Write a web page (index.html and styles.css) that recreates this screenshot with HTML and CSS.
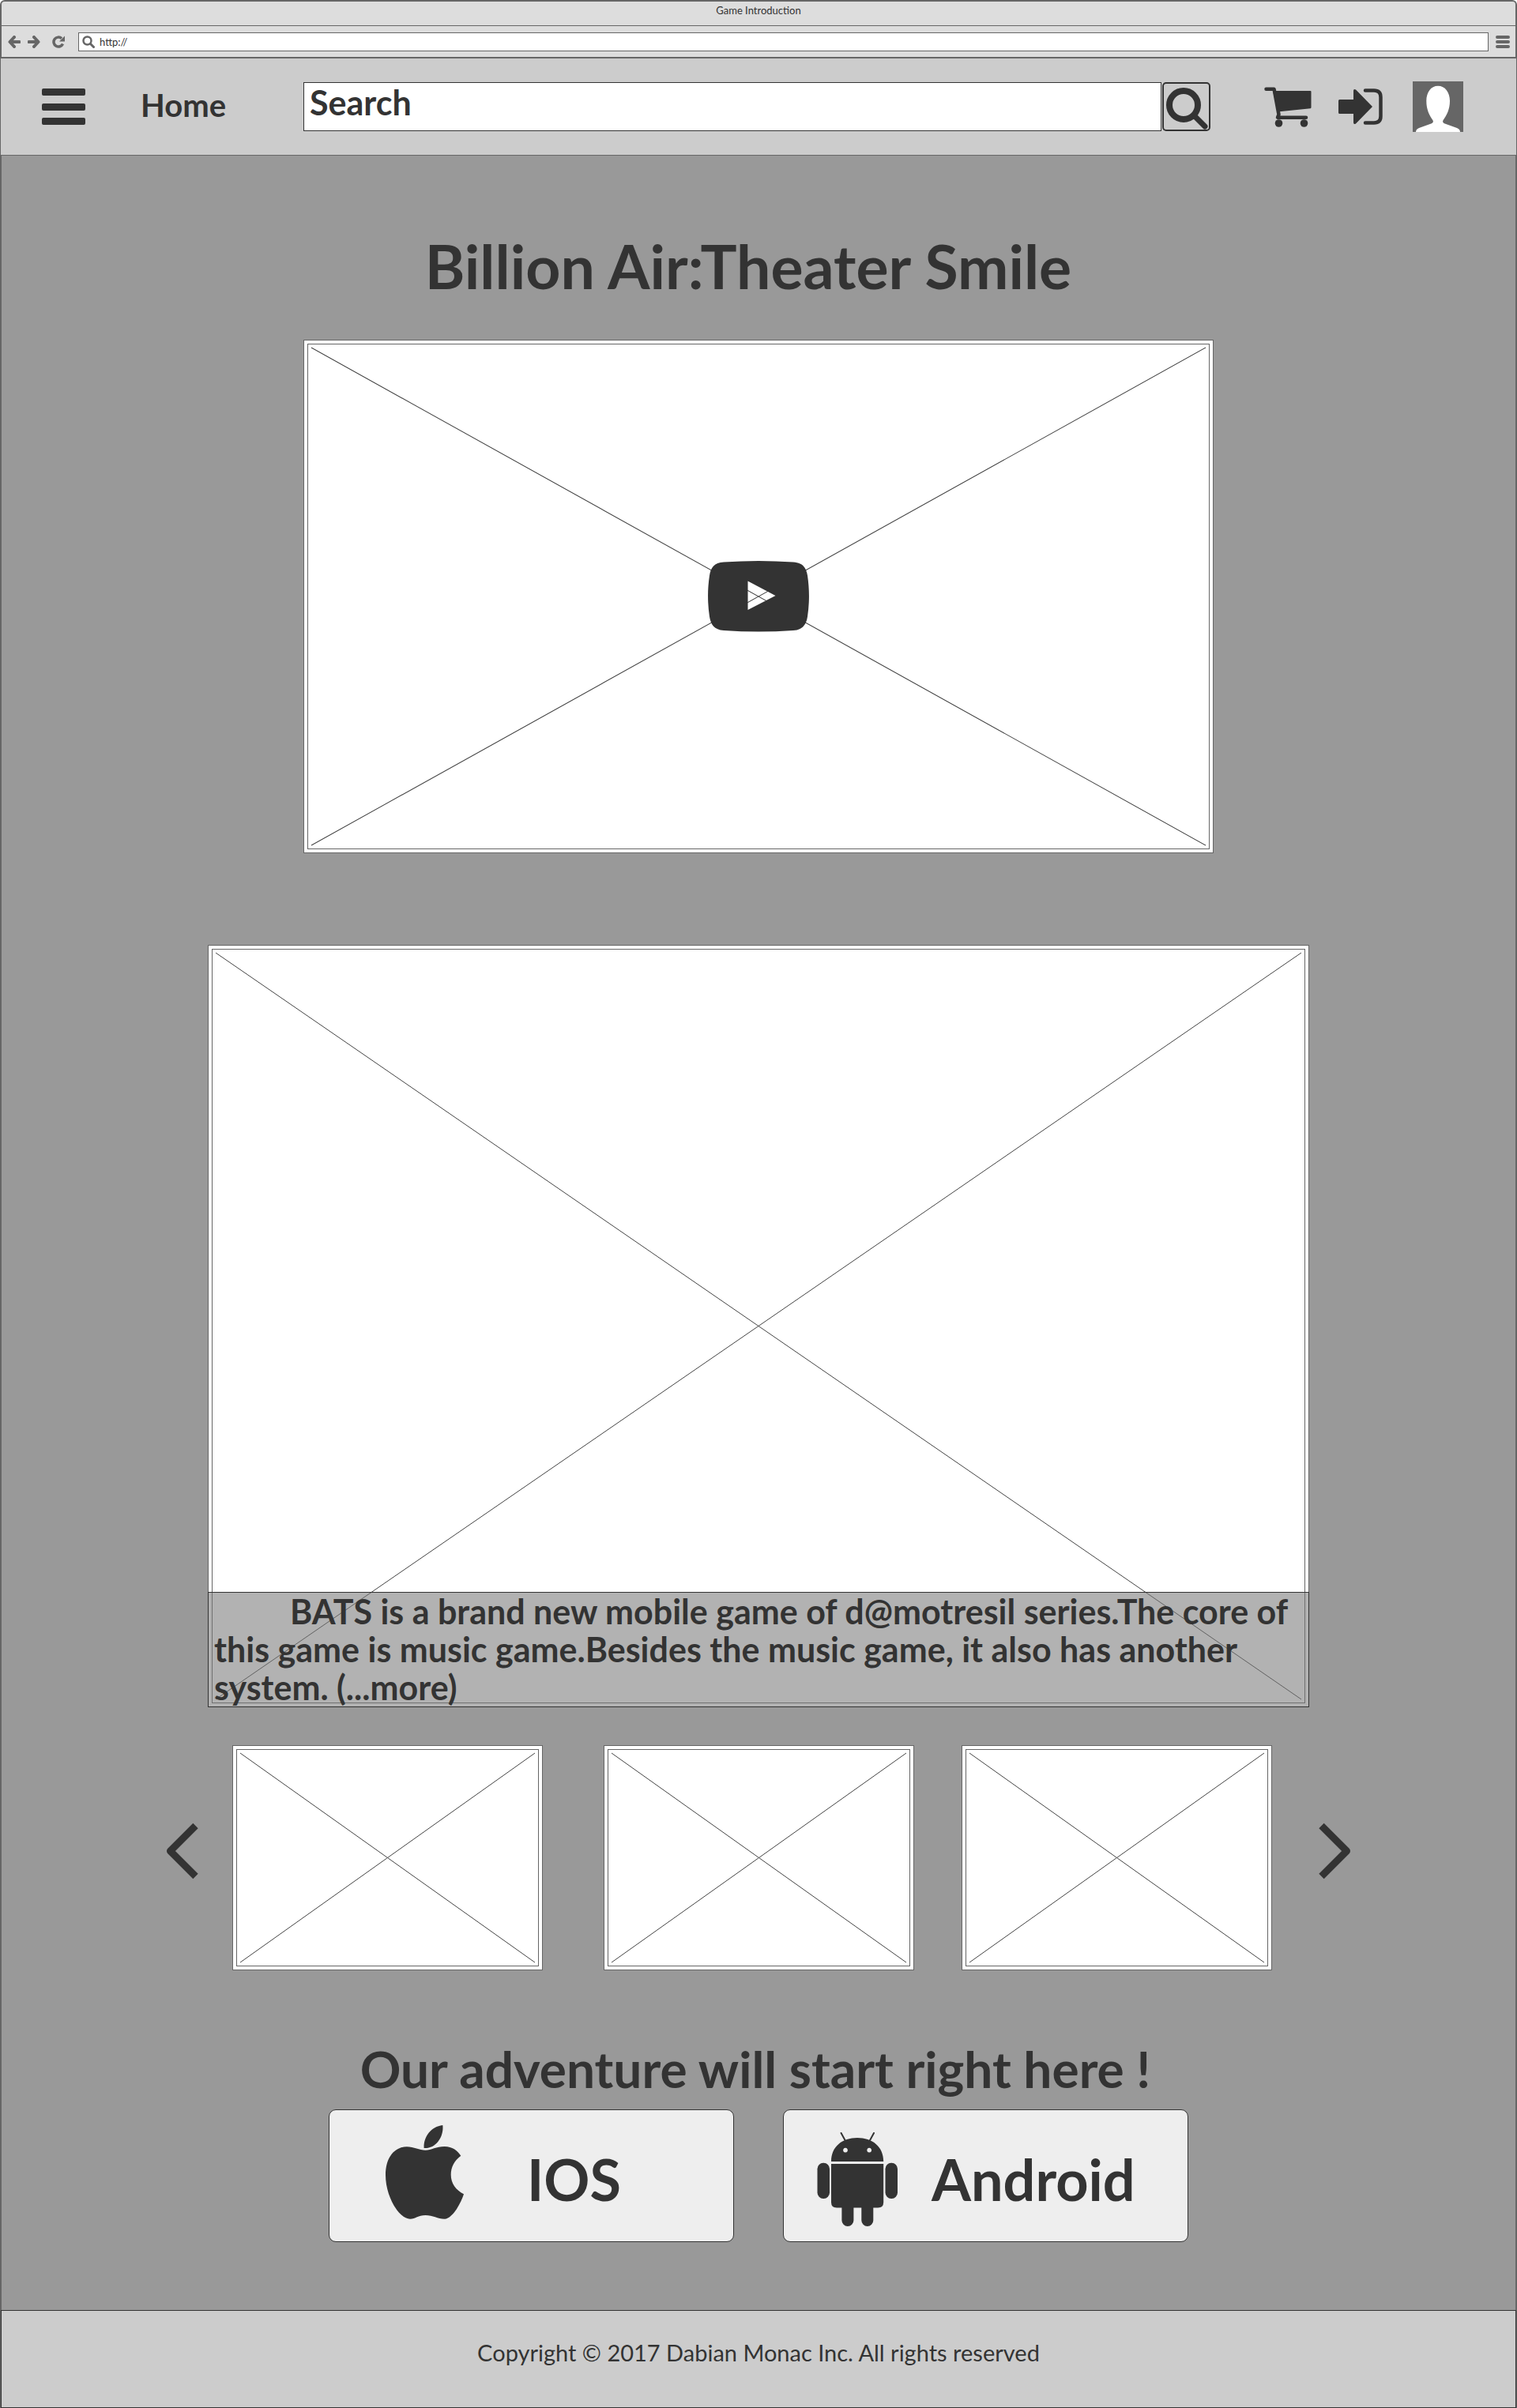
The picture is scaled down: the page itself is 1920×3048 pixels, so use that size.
FILE: index.html
```html
<!DOCTYPE html>
<html lang="en">
<head>
<meta charset="utf-8">
<title>Game Introduction</title>
<meta name="viewport" content="width=device-width, initial-scale=1">
<link rel="stylesheet" href="styles.css">
</head>
<body>
<div class="window">
  <div class="titlebar">Game Introduction</div>
  <div class="toolbar">
    <button class="tool" type="button" aria-label="Back"><svg width="16" height="16" viewBox="0 0 16 16"><path d="M8 2 2.500 8 8 14M3 8h11.500" fill="none" stroke="#666" stroke-width="4" stroke-linecap="round" stroke-linejoin="round"/></svg></button>
    <button class="tool" type="button" aria-label="Forward"><svg width="16" height="16" viewBox="0 0 16 16"><path d="M8 2 13.500 8 8 14M13 8H1.500" fill="none" stroke="#666" stroke-width="4" stroke-linecap="round" stroke-linejoin="round"/></svg></button>
    <button class="tool tool-reload" type="button" aria-label="Reload"><svg width="16" height="16" viewBox="0 0 16 16"><path d="M13.500 10.500A6 6 0 1 1 12 3.600" fill="none" stroke="#666" stroke-width="3.500"/><path d="M16 .5V7.500H9z" fill="#666"/></svg></button>
    <label class="address">
      <svg width="16" height="16" viewBox="0 0 16 16" aria-hidden="true"><circle cx="6.500" cy="6.500" r="5" fill="none" stroke="#666" stroke-width="2.500"/><path d="m10.500 10.500 4 4" stroke="#666" stroke-width="3" stroke-linecap="round"/></svg>
      <input class="address-input" type="text" value="http://" aria-label="Address">
    </label>
    <button class="tool tool-menu" type="button" aria-label="Browser menu"><svg width="18" height="16" viewBox="0 0 18 16"><path d="M2 2h14M2 8h14M2 14h14" stroke="#666" stroke-width="4" stroke-linecap="round"/></svg></button>
  </div>

  <header class="header">
    <button class="icon-button" type="button" aria-label="Menu"><svg width="56" height="46" viewBox="0 0 56 46"><g fill="#333"><rect width="55" height="9" rx="2"/><rect y="19" width="55" height="9" rx="2"/><rect y="37" width="55" height="9" rx="2"/></g></svg></button>
    <a class="home" href="#">Home</a>
    <form class="search">
      <input class="search-input" type="search" placeholder="Search" aria-label="Search">
      <button class="search-button" type="button" aria-label="Search"><svg width="57" height="58" viewBox="0 0 57 58"><circle cx="25" cy="27" r="18" fill="none" stroke="#333" stroke-width="8"/><path d="m40 42 12 12" stroke="#333" stroke-width="7" stroke-linecap="round"/></svg></button>
    </form>
    <nav class="actions">
      <a class="action" href="#" aria-label="Cart"><svg width="60" height="51" viewBox="0 0 60 51"><path d="M2.500 2.700h10L18.500 35 17 38.700h36" fill="none" stroke="#333" stroke-width="4.500" stroke-linecap="round" stroke-linejoin="round"/><path d="M11 5h47.500q1 0 1 1v20q0 1-1 1.200L17 31.500z" fill="#333"/><circle cx="18.500" cy="46" r="4.800" fill="#333"/><circle cx="50.500" cy="46" r="4.800" fill="#333"/></svg></a>
      <a class="action action-login" href="#" aria-label="Log in"><svg width="56" height="46" viewBox="0 0 56 46"><path d="M1.500 14H19V3q0-3 3-1.500L43 23 22 44.500q-3 1.500-3-1.500V32H1.500Q0 32 0 30.500v-15Q0 14 1.500 14z" fill="#333"/><path d="M34 2.500h11Q53.500 2.500 53.500 11v24q0 8.500-8.500 8.500H34" fill="none" stroke="#333" stroke-width="4.500" stroke-linecap="round"/></svg></a>
      <a class="action action-profile" href="#" aria-label="Profile"><svg width="64" height="64" viewBox="0 0 64 64"><path fill="#666" d="M0 0h64v64H0z"/><path fill="#fff" d="M32 5.700c9 0 15 8 15 19 0 11-4 18-8.500 24.500-1 2 0 3.300 1.500 4L56 59q4 1.500 4 5H4q0-3.500 4-5l16-5.800c1.500-.7 2.500-2 1.500-4C21 42.700 17.300 35.700 17.300 24.700c0-11 5.700-19 14.700-19z"/></svg></a>
    </nav>
  </header>

  <main class="main">
    <h1 class="title">Billion Air:Theater Smile</h1>

    <div class="frame video">
      <svg class="cross" viewBox="0 0 100 100" preserveAspectRatio="none" aria-hidden="true"><path d="M0 0 100 100M100 0 0 100"/></svg>
      <button class="play" type="button" aria-label="Play video"><svg width="128" height="90" viewBox="0 0 128 90"><path fill="#333" fill-rule="evenodd" d="M20 1.500Q64-1.500 108 1.500c12 .8 16.500 7 18 17 2.600 17 2.600 35 0 52-1.500 10-6 16.700-18 17.500q-44 3-88 0C8 87.200 3.500 80.500 2 70.500c-2.600-17-2.600-35 0-52 1.500-10 6-16.200 18-17zM50.500 25.500v36.500L85.500 44z"/></svg></button>
    </div>

    <figure class="frame feature">
      <svg class="cross" viewBox="0 0 100 100" preserveAspectRatio="none" aria-hidden="true"><path d="M0 0 100 100M100 0 0 100"/></svg>
      <figcaption class="caption">BATS is a brand new mobile game of d@motresil series.The core of this game is music game.Besides the music game, it also has another system. (...more)</figcaption>
    </figure>

    <div class="gallery">
      <button class="icon-button arrow" type="button" aria-label="Previous"><svg width="42" height="74" viewBox="0 0 42 74"><path d="M37.500 5 5.500 37l32 32" fill="none" stroke="#333" stroke-width="9" stroke-linejoin="round"/></svg></button>
      <div class="frame thumb thumb-1"><svg class="cross" viewBox="0 0 100 100" preserveAspectRatio="none" aria-hidden="true"><path d="M0 0 100 100M100 0 0 100"/></svg></div>
      <div class="frame thumb thumb-2"><svg class="cross" viewBox="0 0 100 100" preserveAspectRatio="none" aria-hidden="true"><path d="M0 0 100 100M100 0 0 100"/></svg></div>
      <div class="frame thumb thumb-3"><svg class="cross" viewBox="0 0 100 100" preserveAspectRatio="none" aria-hidden="true"><path d="M0 0 100 100M100 0 0 100"/></svg></div>
      <button class="icon-button arrow arrow-next" type="button" aria-label="Next"><svg width="42" height="74" viewBox="0 0 42 74"><path d="m4.500 5 32 32-32 32" fill="none" stroke="#333" stroke-width="9" stroke-linejoin="round"/></svg></button>
    </div>

    <h2 class="tagline">Our adventure will start right here !</h2>
    <div class="downloads">
      <button class="download download-ios" type="button">
        <svg width="99" height="119" viewBox="0 0 99 119" aria-hidden="true"><path fill="#333" d="M72.300 0C74 14 64 30 48.600 29 48 15 57 2 72.300 0zM50.500 31.700C58 31.700 64 27 74.600 27c10 0 16 5 20.700 11.700C87 45 82.700 53 82.700 62.700 82.700 74 89 82 99 87.300 95 100 84 118.700 74.600 118.700 66 118.700 60 114 50.500 114S38 118.700 31 118.700C17 118.700 0 90 0 63.300 0 40 12 27.300 26.800 27.300c9 0 16 4.400 23.700 4.400z"/></svg>
        <span>IOS</span>
      </button>
      <button class="download download-android" type="button">
        <svg width="102" height="119" viewBox="0 0 102 119" aria-hidden="true"><g fill="#333"><path fill-rule="evenodd" d="M18 37C18 18 32 7 51 7s33.200 11 33.200 30zM36 19.800a2.900 2.900 0 1 0 .01 0zM66.200 19.800a2.900 2.900 0 1 0 .01 0z"/><path d="M18 40h66.200v48.500q0 7-7 7H25q-7 0-7-7z"/><rect x=".5" y="38.700" width="15.500" height="45.300" rx="7.500"/><rect x="86.500" y="38.700" width="15.500" height="45.300" rx="7.500"/><path d="M31.400 90h15v21.500a7.500 7.500 0 0 1-15 0zM56.300 90h15v21.500a7.500 7.500 0 0 1-15 0z"/></g><path d="m30.600 1 6 11M72 1l-6 11" stroke="#333" stroke-width="2" stroke-linecap="round"/></svg>
        <span>Android</span>
      </button>
    </div>
  </main>

  <footer class="footer">Copyright © 2017 Dabian Monac Inc. All rights reserved</footer>
</div>
</body>
</html>
```
FILE: styles.css
```css
* {
  box-sizing: border-box;
}

body {
  margin: 0;
  background: #fff;
  color: #333;
  font-family: Lato, "Liberation Sans", sans-serif;
}

button {
  padding: 0;
  border: 0;
  background: none;
  color: inherit;
  font: inherit;
  cursor: pointer;
}

input {
  color: inherit;
  font: inherit;
}

svg {
  display: block;
  flex: none;
}

.window {
  border: 2px solid #666;
  border-bottom: 0;
  border-radius: 6px 6px 0 0;
  background: #999;
}

/* Browser chrome */
.titlebar {
  height: 31px;
  border-bottom: 1px solid #666;
  border-radius: 4px 4px 0 0;
  background: #ddd;
  font-size: 13px;
  line-height: 22px;
  text-align: center;
}

.toolbar {
  display: flex;
  align-items: center;
  gap: 9px;
  height: 41px;
  padding: 0 7px 0 8px;
  border-bottom: 2px solid #666;
  background: #ddd;
}

.tool-reload {
  margin: 0 8px 0 6px;
}

.address {
  display: flex;
  flex: 1;
  align-items: center;
  gap: 6px;
  height: 24px;
  padding-left: 4px;
  border: 1px solid #666;
  background: #fff;
}

.address-input {
  flex: 1;
  min-width: 0;
  padding: 0;
  border: 0;
  outline: 0;
  background: none;
  font-size: 13px;
  line-height: 20px;
}

/* Site header */
.header {
  display: flex;
  align-items: center;
  margin: 0 -1px;
  height: 123px;
  padding: 0 67px 0 52px;
  border-bottom: 1px solid #666;
  background: #ccc;
}

.home {
  width: 206px;
  margin-left: 69px;
  padding-bottom: 4px;
  color: #333;
  font-size: 40px;
  font-weight: 700;
  line-height: 48px;
  text-decoration: none;
}

.search {
  display: flex;
  flex: 1;
  gap: 1px;
}

.search-input {
  flex: 1;
  min-width: 0;
  height: 62px;
  padding: 0 7px 12px;
  border: 1px solid #333;
  border-radius: 0;
  outline: 0;
  background: #fff;
  font-size: 43px;
  font-weight: 700;
  line-height: 48px;
  appearance: none;
}

.search-input::placeholder {
  color: #333;
  opacity: 1;
}

.search-button {
  width: 61px;
  height: 62px;
  border: 2px solid #333;
  border-radius: 5px;
}

.actions {
  display: flex;
  align-items: center;
  margin-left: 68px;
}

.action-login {
  margin-left: 34px;
}

.action-profile {
  margin-left: 38px;
}

/* Page content */
.main {
  padding: 95px 24px 86px;
}

.title {
  margin: 0;
  padding-right: 26px;
  font-size: 77px;
  line-height: 88px;
  text-align: center;
}

.frame {
  position: relative;
  padding: 9px;
  border: 1px solid #666;
  background: #fff;
}

.frame::before {
  content: "";
  position: absolute;
  inset: 4px;
  border: 1px solid #666;
}

.cross {
  width: 100%;
  height: 100%;
  overflow: visible;
  fill: none;
  stroke: #444;
}

.cross path {
  vector-effect: non-scaling-stroke;
}

.video {
  max-width: 1152px;
  aspect-ratio: 1152 / 650;
  margin: 50px auto 0;
}

.play {
  position: absolute;
  top: 50%;
  left: 50%;
  transform: translate(-50%, -50%);
}

.feature {
  max-width: 1394px;
  aspect-ratio: 1394 / 965;
  margin: 116px auto 0;
}

.caption {
  position: absolute;
  right: -1px;
  bottom: -1px;
  left: -1px;
  padding: 0 7px;
  border: 1px solid #333;
  background: rgba(119, 119, 119, 0.57);
  font-size: 43px;
  font-weight: 700;
  line-height: 48px;
  text-indent: 96px;
}

.gallery {
  display: grid;
  grid-template-columns: 42px 42fr 393fr 77fr 393fr 60fr 393fr 58fr 42px;
  align-items: center;
  max-width: 1500px;
  margin: 48px auto 0;
}

.arrow {
  margin-bottom: 17px;
}

.arrow-next {
  grid-column: 9;
}

.thumb {
  aspect-ratio: 393 / 285;
}

.thumb-1 {
  grid-column: 3;
}

.thumb-2 {
  grid-column: 5;
}

.thumb-3 {
  grid-column: 7;
}

.tagline {
  margin: 89px 0 0;
  padding-right: 8px;
  font-size: 64px;
  line-height: 72px;
  text-align: center;
}

.downloads {
  display: grid;
  grid-template-columns: 1fr 1fr;
  gap: 62px;
  max-width: 1088px;
  margin: 15px auto 0;
}

.download {
  display: flex;
  align-items: center;
  height: 168px;
  border: 1px solid #333;
  border-radius: 9px;
  background: #eee;
  font-size: 72px;
  font-weight: 700;
  line-height: 88px;
}

.download span {
  padding-top: 8px;
}

.download-ios {
  gap: 80px;
  padding-left: 71px;
}

.download-ios svg {
  margin-bottom: 10px;
}

.download-android {
  gap: 43px;
  padding-left: 42px;
}

.download-android svg {
  margin-top: 8px;
}

/* Footer */
.footer {
  margin: 0 -1px;
  padding: 33px 0 49px;
  border: 1px solid #333;
  background: #ccc;
  font-size: 29px;
  line-height: 40px;
  text-align: center;
}
```
